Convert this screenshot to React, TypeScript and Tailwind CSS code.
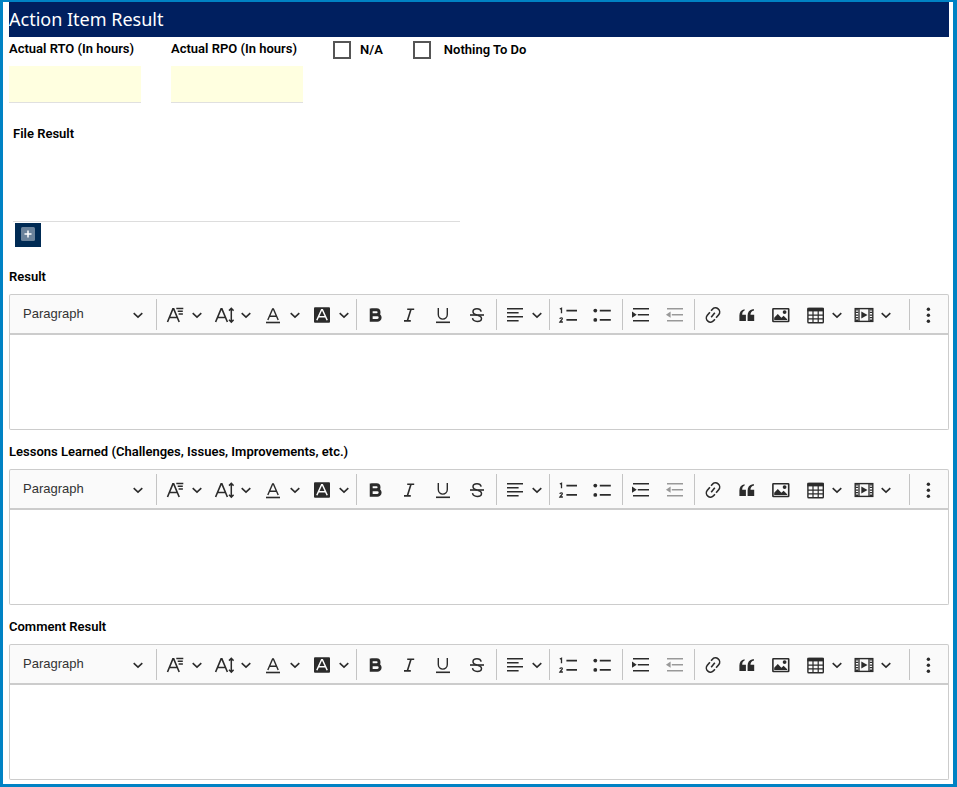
import React, { useState } from 'react';

type IconProps = { children: React.ReactNode; className?: string };

const Icon = ({ children, className = 'text-[#2b2b2b]' }: IconProps) => (
  <svg
    viewBox="0 0 20 20"
    className={`h-5 w-5 shrink-0 ${className}`}
    fill="none"
    stroke="currentColor"
    strokeWidth="1.6"
    aria-hidden="true"
  >
    {children}
  </svg>
);

const Chevron = () => (
  <svg viewBox="0 0 10 10" className="h-[10px] w-[10px] shrink-0 text-[#2b2b2b]" fill="none" stroke="currentColor" strokeWidth="1.6" aria-hidden="true">
    <path d="M.7 3.200l4.300 3.900 4.300-3.900" />
  </svg>
);

const icons = {
  fontFamily: (
    <Icon>
      <path d="M2.500 17L7.900 3.900h.8l5.500 13.100M4.400 12.500h7.800" />
      <path d="M11.300 3.500h7M12.700 6.200h5.100M13.600 9h4.300" strokeWidth="1.400" />
    </Icon>
  ),
  fontSize: (
    <Icon>
      <path d="M1.600 17L7.100 3.900h.8l5.500 13.100M3.600 12.500h7.800" />
      <path d="M17.300 3.500v13.400M15 5.600l2.300-2.300 2.300 2.300M15 14.800l2.300 2.300 2.300-2.300" strokeWidth="1.500" />
    </Icon>
  ),
  fontColor: (
    <Icon>
      <path d="M4.800 15L9.600 4h.8l4.800 11M6.600 11.300h6.800" strokeWidth="1.400" />
      <path d="M3 17.500h14" />
    </Icon>
  ),
  fontBackground: (
    <Icon>
      <rect x="2" y="2.200" width="16" height="15.600" rx="1" fill="currentColor" stroke="none" />
      <path d="M4.800 15.200L9.600 4.800h.8l4.800 10.400M6.600 11.700h6.800" stroke="#fff" strokeWidth="1.500" />
    </Icon>
  ),
  bold: (
    <Icon>
      <path d="M6.200 4.800h5.400a2.400 2.400 0 0 1 0 4.900H6.200M6.200 9.700h6.100a2.850 2.850 0 0 1 0 5.700H6.200M6.200 3.400v13.400" strokeWidth="2.900" />
    </Icon>
  ),
  italic: (
    <Icon>
      <path d="M8.200 4.300h7M5 15.900h6.800M12 4.300L8.300 15.900" />
    </Icon>
  ),
  underline: (
    <Icon>
      <path d="M5.300 3v6.600a4.500 4.500 0 0 0 9 0V3" strokeWidth="1.400" />
      <path d="M3 17.300h14" />
    </Icon>
  ),
  strike: (
    <Icon>
      <path d="M14.200 6.600C13.700 4.700 12.200 3.800 10 3.800 7.500 3.800 6 5 6 6.800 6 8.500 7.200 9.300 10 10M10.500 10.200C13.400 10.900 14.500 11.800 14.500 13.400 14.500 15.300 12.700 16.400 10.200 16.400 7.500 16.400 5.900 15.300 5.500 13.200" strokeWidth="1.500" />
      <path d="M3 10h14" />
    </Icon>
  ),
  align: (
    <Icon>
      <path d="M2 3.700h16M2 7.700h11.600M2 11.700h16M2 15.700h11.600" />
    </Icon>
  ),
  numbered: (
    <Icon>
      <path d="M8.400 5.600H19M8.400 14.900H19" />
      <path d="M1.800 4l1.700-.8v5M1.800 13.800c.2-1.300 2.700-1.300 2.500.1C4.100 14.800 2.600 15.800 1.900 17h3" strokeWidth="1.300" />
    </Icon>
  ),
  bulleted: (
    <Icon>
      <path d="M7.800 5.600h11M7.800 14.900h11" />
      <circle cx="3.300" cy="5.600" r="1.900" fill="currentColor" stroke="none" />
      <circle cx="3.300" cy="14.900" r="1.900" fill="currentColor" stroke="none" />
    </Icon>
  ),
  indent: (
    <Icon>
      <path d="M2 3.700h16M6.800 9.700H18M2 15.700h16" />
      <path d="M1 6.600l4.700 3.100L1 12.800z" fill="currentColor" stroke="none" />
    </Icon>
  ),
  outdent: (
    <Icon className="text-[#999]">
      <path d="M2 3.700h16M6.800 9.700H18M2 15.700h16" />
      <path d="M5.600 6.600L.9 9.700l4.700 3.100z" fill="currentColor" stroke="none" />
    </Icon>
  ),
  link: (
    <Icon>
      <g transform="rotate(-50 10 10)">
        <path d="M8 14.200H6.200a4.200 4.200 0 0 1 0-8.400h4M12 5.800h1.800a4.200 4.200 0 0 1 0 8.400h-4M7.200 10h5.600" />
      </g>
    </Icon>
  ),
  quote: (
    <Icon>
      <path d="M2.400 16V10.600C2.400 7 4.200 4.600 7.600 4.200V5.600C5.900 6.300 5.200 7.700 5.200 9.700H8.900V16zM10.600 16V10.600C10.600 7 12.400 4.600 15.800 4.200H17V5.500C14.600 5.900 13.500 7.700 13.500 9.700H17.200V16z" fill="currentColor" stroke="none" />
    </Icon>
  ),
  image: (
    <Icon>
      <rect x="1.900" y="3.700" width="15.800" height="12.800" rx=".5" />
      <path d="M3.200 15v-2.200l3.600-3.700 3.600 3.700 2.200-2.100 3.600 3.500V15z" fill="currentColor" stroke="none" />
      <circle cx="13.600" cy="7.100" r="1.900" fill="currentColor" stroke="none" />
    </Icon>
  ),
  table: (
    <Icon>
      <rect x="2.900" y="3.400" width="15.400" height="14.400" rx=".8" strokeWidth="1.400" />
      <path d="M2.400 4.600h16.400" strokeWidth="3.600" />
      <path d="M3 10.100h15.400M3 13.900h15.400M8 6v12M13.200 6v12" strokeWidth="1.200" />
    </Icon>
  ),
  media: (
    <Icon>
      <rect x="1.200" y="3.600" width="17.600" height="12.800" strokeWidth="1.400" />
      <path d="M5 3.600v12.800M15 3.600v12.800" strokeWidth="1.300" />
      <path d="M3 4.200v12M17 4.200v12" strokeWidth="2.400" strokeDasharray="1.300 1.300" />
      <path d="M7.300 6.500l6.200 3.500-6.200 3.500z" fill="currentColor" stroke="none" />
    </Icon>
  ),
  more: (
    <Icon>
      <g fill="currentColor" stroke="none">
        <circle cx="10.400" cy="4.300" r="1.700" />
        <circle cx="10.400" cy="10.300" r="1.700" />
        <circle cx="10.400" cy="16.300" r="1.700" />
      </g>
    </Icon>
  ),
};

type ToolProps = { name: keyof typeof icons; label: string; menu?: boolean; disabled?: boolean };

const Tool = ({ name, label, menu, disabled }: ToolProps) => (
  <button
    type="button"
    aria-label={label}
    aria-haspopup={menu ? 'menu' : undefined}
    disabled={disabled}
    className={`flex h-[34px] items-center rounded-sm pl-[7px] enabled:hover:bg-gray-200 ${menu ? 'w-[49px] gap-[7px]' : 'w-[34px]'}`}
  >
    {icons[name]}
    {menu && <Chevron />}
  </button>
);

const Separator = () => <span className="mr-px ml-0.5 h-[31px] w-px bg-[#c4c4c4]" />;

const Toolbar = ({ id }: { id: string }) => (
  <div role="toolbar" className="flex min-h-[41px] flex-wrap items-center rounded-t-xs border border-b-2 border-[#ccc] bg-[#fafafa] pt-px pr-[3px]">
    <div className="relative flex w-36 items-center">
      <select
        aria-label={`${id} heading`}
        className="h-8 w-full appearance-none bg-transparent pb-0.5 pl-[13px] text-[13px] font-normal text-[#333] outline-none"
        style={{ fontFamily: '"Liberation Sans", Arial, sans-serif' }}
      >
        <option>Paragraph</option>
        <option>Heading 1</option>
        <option>Heading 2</option>
        <option>Heading 3</option>
      </select>
      <span className="pointer-events-none absolute right-[11px]">
        <Chevron />
      </span>
    </div>
    <Separator />
    <Tool name="fontFamily" label="Font Family" menu />
    <Tool name="fontSize" label="Font Size" menu />
    <Tool name="fontColor" label="Font Color" menu />
    <Tool name="fontBackground" label="Font Background Color" menu />
    <Separator />
    <Tool name="bold" label="Bold" />
    <Tool name="italic" label="Italic" />
    <Tool name="underline" label="Underline" />
    <Tool name="strike" label="Strikethrough" />
    <Separator />
    <Tool name="align" label="Text alignment" menu />
    <Separator />
    <div className="flex pr-px">
      <Tool name="numbered" label="Numbered List" />
      <Tool name="bulleted" label="Bulleted List" />
    </div>
    <Separator />
    <div className="flex">
      <Tool name="indent" label="Increase indent" />
      <Tool name="outdent" label="Decrease indent" disabled />
    </div>
    <Separator />
    <Tool name="link" label="Link" />
    <Tool name="quote" label="Block quote" />
    <Tool name="image" label="Insert image" />
    <Tool name="table" label="Insert table" menu />
    <Tool name="media" label="Insert media" menu />
    <div className="ml-auto flex items-center">
      <Separator />
      <Tool name="more" label="Show more items" />
    </div>
  </div>
);

const Editor = ({ id, label }: { id: string; label: string }) => {
  const [value, setValue] = useState('');

  return (
    <section>
      <label htmlFor={id} className="flex h-[39px] items-center pt-1">
        {label}
      </label>
      <Toolbar id={id} />
      <textarea
        id={id}
        value={value}
        onChange={e => setValue(e.target.value)}
        className="block h-[95px] w-full resize-none rounded-b-xs border border-t-0 border-[#ccc] bg-white p-2 font-normal outline-none"
      />
    </section>
  );
};

const HoursField = ({ id, label }: { id: string; label: string }) => (
  <div className="w-[132px]">
    <label htmlFor={id} className="block h-[29px] pt-1 whitespace-nowrap">
      {label}
    </label>
    <input
      id={id}
      type="text"
      className="block h-[37px] w-full border-b border-[#e0e0e0] bg-[#ffffe0] px-2 font-normal outline-none"
    />
  </div>
);

const CheckField = ({ id, label, gap }: { id: string; label: string; gap: string }) => (
  <div className={`flex h-[26px] items-center ${gap}`}>
    <input
      id={id}
      type="checkbox"
      className="h-[18px] w-[18px] appearance-none border-2 border-[#555] bg-white checked:bg-[#555]"
    />
    <label htmlFor={id}>{label}</label>
  </div>
);

const App = () => {
  return (
    <div
      className="min-h-screen border-t-2 border-r-4 border-b-[3px] border-l-[3px] border-[#0082c4] bg-white pr-1 pb-1 pl-1.5 text-[13px] leading-4 font-semibold text-black"
      style={{ fontFamily: 'Roboto, sans-serif' }}
    >
      <h1
        className="flex h-[35px] items-center bg-[#001f5f] pb-0.5 text-lg font-normal text-white"
        style={{ fontFamily: '"Noto Sans", sans-serif' }}
      >
        Action Item Result
      </h1>

      {/* RTO / RPO */}
      <div className="flex flex-wrap gap-[30px]">
        <HoursField id="rto" label="Actual RTO (In hours)" />
        <HoursField id="rpo" label="Actual RPO (In hours)" />
        <CheckField id="na" label="N/A" gap="gap-[9px]" />
        <CheckField id="nothing" label="Nothing To Do" gap="gap-[13px]" />
      </div>

      {/* Files */}
      <div className="pt-[23px] pl-1">
        <h2 className="font-semibold">File Result</h2>
        <div className="h-20 w-[447px] max-w-full border-b border-[#ddd]" />
        <button type="button" aria-label="Add file" className="mt-px ml-0.5 flex h-6 w-[26px] items-center justify-center bg-[#002b54] pb-0.5">
          <svg viewBox="0 0 14 14" className="h-[14px] w-[14px]" aria-hidden="true">
            <rect width="14" height="14" rx="1.500" fill="#6b839b" />
            <path d="M7 3.500v7M3.500 7h7" stroke="#fff" strokeWidth="1.500" />
          </svg>
        </button>
      </div>

      <div className="pt-2">
        <Editor id="result" label="Result" />
        <Editor id="lessons" label="Lessons Learned (Challenges, Issues, Improvements, etc.)" />
        <Editor id="comment" label="Comment Result" />
      </div>
    </div>
  );
};

export default App;
